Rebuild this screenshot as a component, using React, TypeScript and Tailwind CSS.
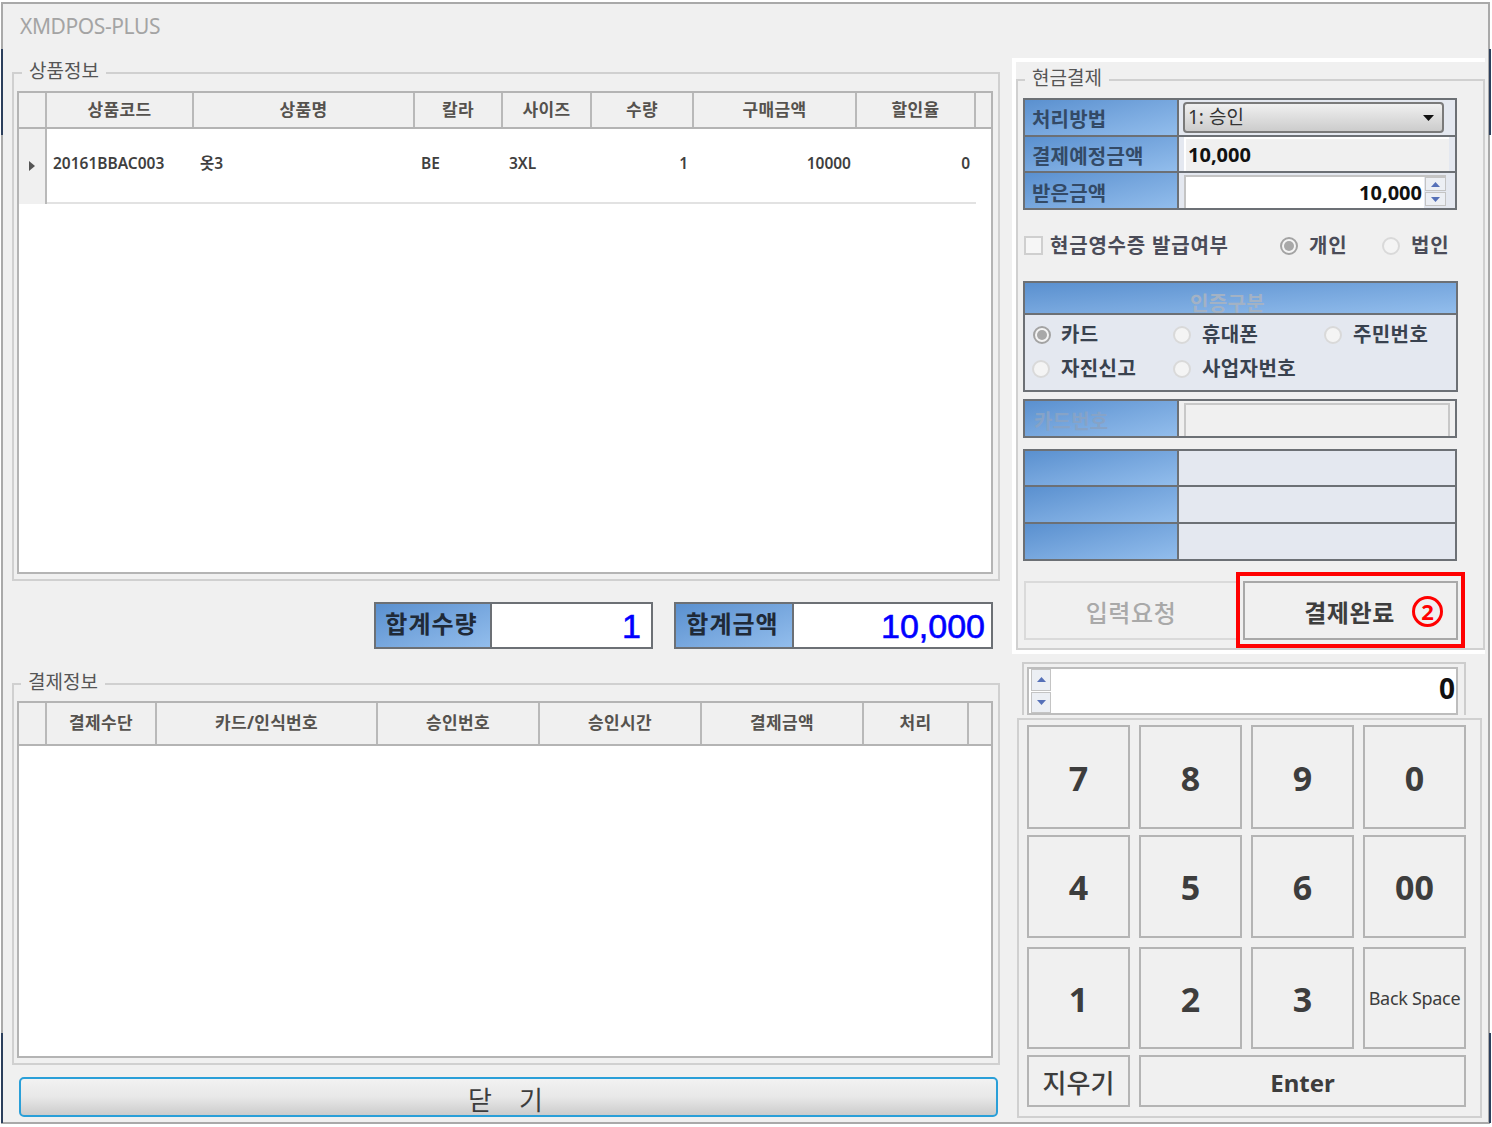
import type { ReactNode } from "react"

const blue = "bg-linear-to-br from-[#5a90cf] via-[#77a7de] to-[#92bdec]"
const kr = "font-['Noto_Sans','Noto_Sans_CJK_KR',sans-serif]"

function Radio({ on, className = "" }: { on?: boolean; className?: string }) {
  return (
    <span className={`flex size-[18px] shrink-0 items-center justify-center rounded-full border-2 bg-[#f4f4f4] ${on ? "border-[#a3a3a3]" : "border-[#d9d9d9]"} ${className}`}>
      {on && <span className="size-[10px] rounded-full bg-[#a8a8a8]" />}
    </span>
  )
}

function Spin({ className = "" }: { className?: string }) {
  return (
    <div className={`flex flex-col gap-px ${className}`}>
      <div className="flex flex-1 items-center justify-center border border-[#c4c4c4] bg-[#eceff4]">
        <svg width="9" height="5" viewBox="0 0 9 5"><path d="M4.5 0 9 5H0z" fill="#5570b8" /></svg>
      </div>
      <div className="flex flex-1 items-center justify-center border border-[#c4c4c4] bg-[#eceff4]">
        <svg width="9" height="5" viewBox="0 0 9 5"><path d="M0 0h9L4.500 5z" fill="#5570b8" /></svg>
      </div>
    </div>
  )
}

function FormRow({ label, disabled, children }: { label?: string; disabled?: boolean; children?: ReactNode }) {
  return (
    <div className="flex h-[36.7px] border-b-2 border-[#6c7075]">
      <div className={`flex w-[152px] shrink-0 items-center text-[20px] font-bold tracking-[0.2px] ${disabled ? "pl-[9px] pt-[8px] text-[#86a3c7]" : "pl-[7px] pt-[6px] text-[#334a66]"} ${blue}`}>
        {label}
      </div>
      <div className="min-w-0 flex-1 border-l-2 border-[#6c7075] bg-[#e4e8f0]">{children}</div>
    </div>
  )
}

function Cell({ w, children, right, header }: { w: string; children?: ReactNode; right?: boolean; header?: boolean }) {
  return (
    <div className={`flex shrink-0 items-center ${w} ${header ? "justify-center border-r-2 border-[#b9b9b9] pb-[1px] text-[17px] font-bold tracking-[0.3px] text-[#55524e]" : "border-b-2 border-[#e2e2e2] px-[6px] pb-[4px] text-[15.500px] font-semibold text-[#3f3f3f]"} ${right ? "justify-end px-[3px]" : ""}`}>
      {children}
    </div>
  )
}

function Group({ title, className, legend = "ml-[5px]", children }: { title: string; className: string; legend?: string; children: ReactNode }) {
  return (
    <fieldset className={`border-2 border-[#d0d0d0] ${className}`}>
      <legend className={`h-[24px] px-[7px] text-[19px] leading-[20px] text-[#555] ${legend}`}>{title}</legend>
      {children}
    </fieldset>
  )
}

function Key({ children, className = "pt-[2px] text-[34px] font-bold" }: { children: ReactNode; className?: string }) {
  return (
    <button className={`flex h-full w-[103px] items-center justify-center border-2 border-[#b4b4b4] text-[#3d3d3d] ${className}`}>
      {children}
    </button>
  )
}

const rows = [
  ["7", "8", "9", "0"],
  ["4", "5", "6", "00"],
  ["1", "2", "3", "Back Space"],
]
const rowClasses = ["h-[104px]", "mt-[6px] h-[103px]", "mt-[9px] h-[102px]"]

export default function App() {
  return (
    <div className={`relative h-[1127px] w-[1492px] overflow-hidden bg-white pl-[1px] pt-[2px] ${kr}`}>
      <div className="h-[1122px] w-[1489px] border-2 border-[#a9a9a9] bg-[#f0f0f0]">
        <div className="flex h-[54px] items-start pl-[17px] pt-[6px] text-[21px] leading-[32px] tracking-[-0.4px] text-[#a4a4a4]">XMDPOS-PLUS</div>
        <div className="flex">
          {/* left column */}
          <div className="ml-[9px] w-[988px] pt-[3px]">
            <Group title="상품정보" className="h-[520px] pb-[5px] pl-[3px] pr-[5px] pt-[6px]">
              <div className="h-[483px] border-2 border-[#b4b4b4] bg-white">
                <div className="flex h-[36px] border-b-2 border-[#b4b4b4] bg-[#f0f0f0]">
                  <Cell w="w-[28px]" header />
                  <Cell w="w-[147px]" header>상품코드</Cell>
                  <Cell w="w-[221px]" header>상품명</Cell>
                  <Cell w="w-[88px]" header>칼라</Cell>
                  <Cell w="w-[89px]" header>사이즈</Cell>
                  <Cell w="w-[102px]" header>수량</Cell>
                  <Cell w="w-[163px]" header>구매금액</Cell>
                  <Cell w="w-[119px]" header>할인율</Cell>
                </div>
                <div className="flex h-[75px]">
                  <div className="flex w-[28px] shrink-0 items-center justify-center border-r-2 border-[#b9b9b9] bg-[#f0f0f0] pb-[2px]">
                    <svg width="6" height="10" viewBox="0 0 6 10"><path d="M0 0l6 5-6 5z" fill="#555" /></svg>
                  </div>
                  <Cell w="w-[147px]">20161BBAC003</Cell>
                  <Cell w="w-[221px]">옷3</Cell>
                  <Cell w="w-[88px]">BE</Cell>
                  <Cell w="w-[89px]">3XL</Cell>
                  <Cell w="w-[102px]" right>1</Cell>
                  <Cell w="w-[163px]" right>10000</Cell>
                  <Cell w="w-[119px]" right>0</Cell>
                </div>
              </div>
            </Group>

            <div className="mt-[21px] flex h-[47px] justify-end gap-[21px] pr-[7px]">
              <div className="flex w-[279px] border-2 border-[#6c7075] bg-white">
                <div className={`flex w-[114px] items-center justify-center pb-[3px] pr-[3px] text-[24px] font-bold tracking-[1px] text-[#1f2a38] ${blue}`}>합계수량</div>
                <div className="flex flex-1 items-center justify-end border-l-2 border-[#6c7075] pr-[10px] font-['Liberation_Sans',sans-serif] text-[34px] leading-none text-[#0000ff] [-webkit-text-stroke:0.6px_#0000ff]">1</div>
              </div>
              <div className="flex w-[319px] border-2 border-[#6c7075] bg-white">
                <div className={`flex w-[116px] items-center justify-center pb-[3px] pr-[3px] text-[24px] font-bold tracking-[1px] text-[#1f2a38] ${blue}`}>합계금액</div>
                <div className="flex flex-1 items-center justify-end border-l-2 border-[#6c7075] pr-[6px] font-['Liberation_Sans',sans-serif] text-[34px] leading-none text-[#0000ff] [-webkit-text-stroke:0.6px_#0000ff]">10,000</div>
              </div>
            </div>

            <Group title="결제정보" legend="ml-[4px]" className="mt-[23px] h-[393px] pb-[5px] pl-[3px] pr-[5px] pt-[5px]">
              <div className="h-[357px] border-2 border-[#b4b4b4] bg-white">
                <div className="flex h-[43px] border-b-2 border-[#b4b4b4] bg-[#f0f0f0]">
                  <Cell w="w-[28px]" header />
                  <Cell w="w-[110px]" header>결제수단</Cell>
                  <Cell w="w-[221px]" header>카드/인식번호</Cell>
                  <Cell w="w-[162px]" header>승인번호</Cell>
                  <Cell w="w-[162px]" header>승인시간</Cell>
                  <Cell w="w-[162px]" header>결제금액</Cell>
                  <Cell w="w-[105px]" header>처리</Cell>
                </div>
              </div>
            </Group>

            <button className="ml-[7px] mt-[12px] flex h-[40px] w-[979px] items-end justify-center overflow-hidden whitespace-pre rounded-[5px] border-2 border-[#2a9fd8] bg-linear-to-b from-[#f2f2f2] via-[#e8e8e8] via-50% to-[#cccccc] pr-[6px] text-[26px] leading-[30px] text-[#3d3d3d]">
              닫    기
            </button>
          </div>

          {/* right column */}
          <div className="ml-[12px] w-[473px]">
            <div className="border-y-4 border-l-4 border-white pt-[6px]">
              <Group title="현금결제" legend="ml-[2px]" className="h-[582px] pl-[5px] pt-[6px]">
                <div className="w-[434px] border-x-2 border-t-2 border-[#6c7075]">
                  <FormRow label="처리방법">
                    <div className="ml-[4px] mt-[2px] flex h-[31px] w-[261px] items-center justify-between rounded-[4px] border-2 border-[#7a7a7a] bg-linear-to-b from-[#f0f0f0] to-[#cccccc] pl-[3px] pr-[8px] text-[19px] text-[#333]">
                      1: 승인
                      <svg width="11" height="6" viewBox="0 0 11 6"><path d="M0 0h11L5.500 6z" fill="#111" /></svg>
                    </div>
                  </FormRow>
                  <FormRow label="결제예정금액">
                    <div className="ml-[5px] flex h-full w-[265px] items-center border-l-2 border-t-2 border-white bg-[#f0f0f0] pl-[2px] text-[20px] font-bold text-[#111]">10,000</div>
                  </FormRow>
                  <FormRow label="받은금액">
                    <div className="ml-[5px] mt-[2px] flex h-[33px] w-[262px] border-l-2 border-t-2 border-[#c4c4c4]">
                      <div className="flex flex-1 items-center justify-end bg-white pr-[2px] text-[20px] font-bold text-[#111]">10,000</div>
                      <Spin className="ml-[1px] h-full w-[21px] pb-[2px]" />
                    </div>
                  </FormRow>
                </div>

                <div className="flex h-[71px] items-center whitespace-nowrap text-[20px] font-bold tracking-[0.8px] text-[#4b4c58]">
                  <span className="ml-[1px] size-[19px] border-2 border-[#cfcfcf] bg-[#f6f6f6]" />
                  <span className="ml-[7px] w-[230px]">현금영수증 발급여부</span>
                  <Radio on />
                  <span className="ml-[11px] w-[38px]">개인</span>
                  <Radio className="ml-[35px]" />
                  <span className="ml-[11px]">법인</span>
                </div>

                <div className="h-[111px] w-[435px] border-2 border-[#6c7075] bg-[#e4e8f0] text-[20px] font-bold tracking-[0.4px] text-[#39424f]">
                  <div className={`flex h-[32px] justify-center border-b-2 border-[#6c7075] pr-[26px] pt-[8px] leading-[26px] text-[#a3b2c4] ${blue}`}>인증구분</div>
                  <div className="mt-[3px] grid h-[34px] grid-cols-[140px_151px_1fr] items-center pl-[8px]">
                    <div className="flex items-center gap-[10px]"><Radio on />카드</div>
                    <div className="flex items-center gap-[11px]"><Radio />휴대폰</div>
                    <div className="flex items-center gap-[11px]"><Radio />주민번호</div>
                  </div>
                  <div className="grid h-[34px] grid-cols-[141px_151px_1fr] items-center pl-[7px]">
                    <div className="flex items-center gap-[11px]"><Radio />자진신고</div>
                    <div className="flex items-center gap-[11px]"><Radio />사업자번호</div>
                  </div>
                </div>

                <div className="mt-[7px] w-[434px] border-x-2 border-t-2 border-[#6c7075]">
                  <FormRow label="카드번호" disabled>
                    <div className="h-full bg-[#f0f0f0] pl-[5px] pr-[3px] pt-[2px]">
                      <div className="h-full w-[266px] border-x-2 border-t-2 border-[#c8c8c8] bg-[#f0f0f0]" />
                    </div>
                  </FormRow>
                </div>

                <div className="mt-[11px] w-[434px] border-x-2 border-t-2 border-[#6c7075]">
                  <FormRow />
                  <FormRow />
                  <FormRow />
                </div>

                <div className="ml-[1px] mt-[20px] flex h-[59px] w-[434px] gap-[5px]">
                  <button className="w-[214px] border-2 border-[#dadada] pt-[5px] text-[24px] font-medium tracking-[0.6px] text-[#a9a9a9]">입력요청</button>
                  <div className="relative w-[215px]">
                    <button className="size-full border-2 border-[#a8a8a8] pr-[2px] pt-[5px] text-[24px] font-semibold tracking-[0.6px] text-[#3d3d3d]">결제완료</button>
                    <div className="absolute -bottom-[8px] -left-[7px] -right-[7px] -top-[9px] border-4 border-[#ff0000]">
                      <span className="absolute left-[172px] top-[20px] flex size-[31px] items-center justify-center rounded-full border-[3px] border-[#ff0000] text-[22px] font-bold text-[#ff0000]">2</span>
                    </div>
                  </div>
                </div>
              </Group>
            </div>

            <div className="ml-[10px] mt-[8px] h-[53px] w-[444px] border-2 border-b-0 border-[#cdcdcd] pl-[3px] pt-[3px]">
              <div className="flex h-[48px] w-[431px] items-center justify-between border-2 border-[#bdbdbd] bg-white pb-[6px] pl-[2px] pr-[1px] text-[28px] font-bold text-[#111]">
                <Spin className="mt-[6px] h-[44px] w-[20px]" />
                0
              </div>
            </div>

            <div className="ml-[5px] mt-[3px] h-[400px] w-[465px] border-2 border-[#d0d0d0] pl-[8px] pt-[5px]">
              {rows.map((row, i) => (
                <div key={i} className={`flex gap-[9px] ${rowClasses[i]}`}>
                  {row.map((k) => (
                    <Key key={k} className={k === "Back Space" ? "text-[18px] font-normal tracking-[-0.3px]" : undefined}>{k}</Key>
                  ))}
                </div>
              ))}
              <div className="mt-[6px] flex h-[52px] gap-[9px]">
                <Key className="pt-[4px] text-[26px] font-medium">지우기</Key>
                <button className="w-[327px] border-2 border-[#b4b4b4] pt-[3px] text-[24px] font-bold text-[#3d3d3d]">Enter</button>
              </div>
            </div>
          </div>
        </div>
      </div>

      {/* dark desktop showing past the window edge */}
      <div className="absolute left-[1px] top-[49px] h-[86px] w-[2px] bg-[#2c3f5c]" />
      <div className="absolute left-[1px] top-[1033px] h-[90px] w-[2px] bg-[#2c3f5c]" />
      <div className="absolute left-[1489px] top-[49px] h-[86px] w-[2px] bg-[#2c3f5c]" />
      <div className="absolute left-[1489px] top-[1033px] h-[90px] w-[2px] bg-[#2c3f5c]" />
    </div>
  )
}
